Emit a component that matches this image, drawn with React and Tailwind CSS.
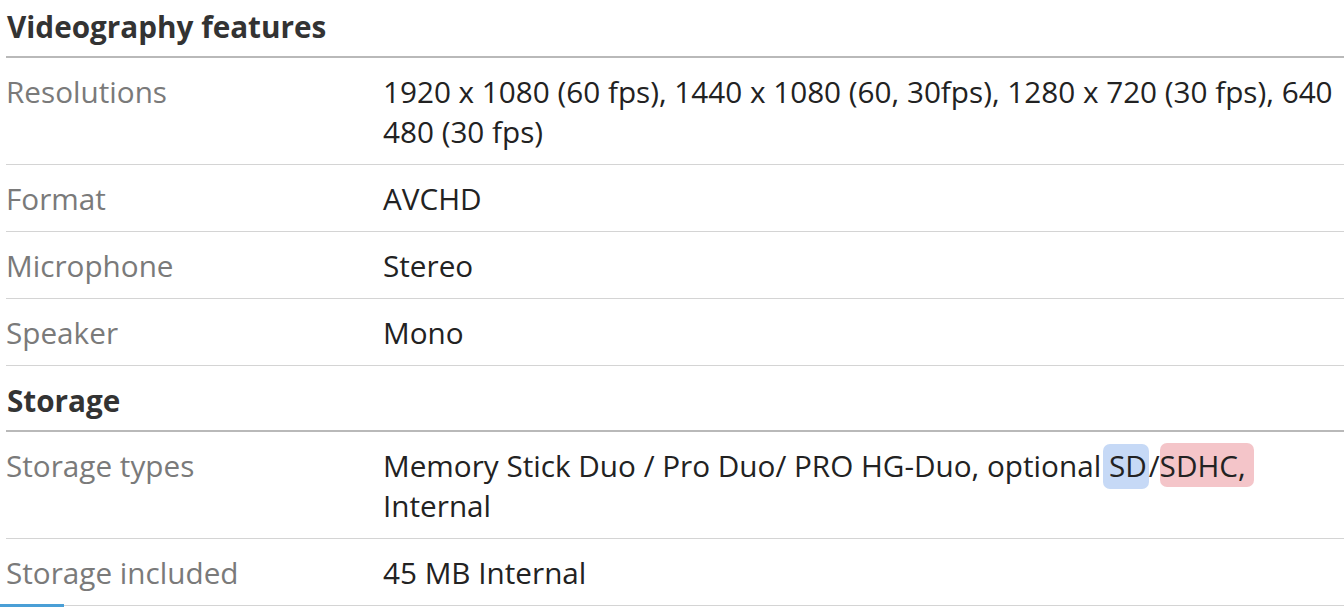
import React from 'react';

const sections = [
  {
    title: 'Videography features',
    first: true,
    rows: [
      {
        label: 'Resolutions',
        value: (
          <>
            1920 x 1080 (60 fps), 1440 x 1080 (60, 30fps), 1280 x 720 (30 fps), 640
            <br />
            480 (30 fps)
          </>
        ),
      },
      { label: 'Format', value: 'AVCHD' },
      { label: 'Microphone', value: 'Stereo' },
      { label: 'Speaker', value: 'Mono' },
    ],
  },
  {
    title: 'Storage',
    rows: [
      {
        label: 'Storage types',
        value: (
          <>
            Memory Stick Duo / Pro Duo/ PRO HG-Duo, optional{' '}
            <span className="ml-[-6px] rounded-[7px] bg-[#c6d9f6] pb-[3px] pl-[6px] pr-[2px] pt-[1px]">SD</span>
            /
            <span className="rounded-[7px] bg-[#f4c5c9] pb-[1px] pr-[8px] pt-[2px]">SDHC,</span>
            <br />
            Internal
          </>
        ),
      },
      { label: 'Storage included', value: '45 MB Internal', active: true },
    ],
  },
];

function Row({ label, value, active }) {
  return (
    <div className="relative flex border-b border-[#d4d4d4] pb-[12px] pt-[14px] leading-[40px]">
      <div className="w-[377px] shrink-0 text-[#7a7a7a]">{label}</div>
      <div className="whitespace-nowrap text-[#222]">{value}</div>
      {active && <div className="absolute bottom-[-2px] left-[-7px] h-[3px] w-[65px] bg-[#4a9fd6]" />}
    </div>
  );
}

export default function App() {
  return (
    <div className="h-[609px] w-[1344px] overflow-hidden bg-white pl-[6px] font-['Open_Sans',sans-serif] text-[29.7px]">
      {sections.map((s) => (
        <div key={s.title}>
          <h2
            className={
              s.first
                ? 'border-b-2 border-[#b9b9b9] pb-[9px] pl-[1px] pt-[7px] font-bold leading-[40px] text-[#333]'
                : 'border-b-2 border-[#b9b9b9] pb-[9px] pl-[1px] pt-[15px] font-bold leading-[40px] text-[#333]'
            }
          >
            {s.title}
          </h2>
          {s.rows.map((r) => (
            <Row key={r.label} {...r} />
          ))}
        </div>
      ))}
    </div>
  );
}
